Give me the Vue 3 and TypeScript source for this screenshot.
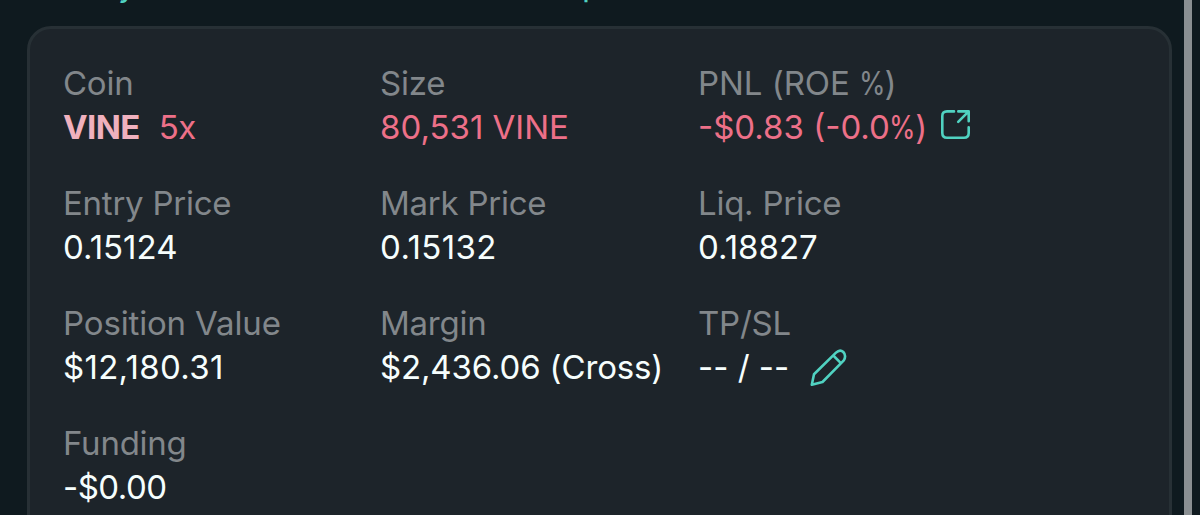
<script setup lang="ts">
type Kind = 'coin' | 'down' | 'plain'
interface Field {
  id: string
  label: string
  value: string
  kind: Kind
  extra?: string
  icon?: 'share' | 'edit'
}

const fields: Field[] = [
  { id: 'coin-name', label: 'Coin', value: 'VINE', kind: 'coin', extra: '5x' },
  { id: 'size', label: 'Size', value: '80,531 VINE', kind: 'down' },
  { id: 'pnl', label: 'PNL (ROE %)', value: '-$0.83 (-0.0%)', kind: 'down', icon: 'share' },
  { id: 'entry', label: 'Entry Price', value: '0.15124', kind: 'plain' },
  { id: 'mark', label: 'Mark Price', value: '0.15132', kind: 'plain' },
  { id: 'liq', label: 'Liq. Price', value: '0.18827', kind: 'plain' },
  { id: 'position', label: 'Position Value', value: '$12,180.31', kind: 'plain' },
  { id: 'margin', label: 'Margin', value: '$2,436.06 (Cross)', kind: 'plain' },
  { id: 'tpsl', label: 'TP/SL', value: '-- / --', kind: 'plain', icon: 'edit' },
  { id: 'funding', label: 'Funding', value: '-$0.00', kind: 'plain' },
]

// Percent signs are set in a condensed form, so they are split out of the text.
const parts = (text: string): string[] => text.split(/(%)/)
</script>

<template>
  <main class="screen">
    <div class="links"><span class="first">y</span><span>p</span></div>
    <section class="card">
      <div v-for="f in fields" :key="f.id" class="field" :class="f.id">
        <div class="label"><span v-for="(p, i) in parts(f.label)" :key="i" :class="{ percent: p === '%' }">{{ p }}</span></div>
        <div class="value" :class="f.kind">
          <span v-for="(p, i) in parts(f.value)" :key="i" :class="{ percent: p === '%' }">{{ p }}</span>
          <span v-if="f.extra" class="leverage">{{ f.extra }}</span>
          <svg v-if="f.icon === 'share'" class="share" viewBox="0 0 32 32" width="32" height="32">
            <path d="M14 2.4H7Q2.3 2.4 2.3 7V24Q2.3 28.7 7 28.7H24Q28.7 28.7 28.7 24V18.3M18.3 2.4H28.7V12.2M28.2 2.9L18.2 12.9" />
          </svg>
          <svg v-if="f.icon === 'edit'" class="edit" viewBox="0 0 38 38" width="38" height="38">
            <path d="M2.8 36.7L5 26.2L27 4.6Q31 .8 34.3 4Q37.6 7.6 34.8 12.4L13.5 34ZM24.3 7.5L31.6 14.8" />
          </svg>
        </div>
      </div>
    </section>
    <div class="scrollbar"></div>
  </main>
</template>

<style>
body {
  background: #0f1a1f;
  overflow: hidden;
}
</style>

<style scoped>
.screen {
  position: relative;
  box-sizing: border-box;
  width: 1200px;
  height: 515px;
  padding: 26px 28px 0 27px;
  overflow: hidden;
  background: #0f1a1f;
  font-family: Inter, sans-serif;
  font-size: 33px;
}
.links {
  position: absolute;
  top: -36px;
  left: 118px;
  display: flex;
  line-height: 40px;
  color: #50d2c1;
}
.first {
  width: 464px;
}
.card {
  box-sizing: border-box;
  height: 540px;
  padding: 32px 33px 0;
  display: grid;
  grid-template-columns: 317px 318px 1fr;
  grid-auto-rows: 120px;
  align-content: start;
  border: 3px solid #273035;
  border-radius: 24px;
  background: #1d242a;
}
.label,
.value {
  height: 44px;
  line-height: 44px;
  white-space: pre;
}
.label {
  color: #82878b;
  letter-spacing: -0.25px;
}
.value {
  display: flex;
  color: #f6fefd;
}
.percent {
  display: inline-block;
  margin: 0 -3.5px;
  transform: scaleX(0.82);
}
.pnl .label {
  letter-spacing: -0.05px;
}
.position .label {
  letter-spacing: -0.15px;
}
.mark .value {
  letter-spacing: 0.4px;
}
.position .value {
  letter-spacing: 0.3px;
}
.margin .value {
  letter-spacing: -0.15px;
}
.funding .value {
  letter-spacing: -0.5px;
}
.down {
  color: #ed7088;
}
.coin {
  color: #f0b1be;
  font-weight: 700;
  letter-spacing: -0.6px;
}
.leverage {
  margin-left: 19px;
  color: #ed7088;
  font-weight: 400;
}
svg {
  flex: none;
  fill: none;
  stroke: #50d2c1;
  stroke-width: 2.6;
  stroke-linecap: round;
  stroke-linejoin: round;
}
.share {
  margin: 4px 0 0 13px;
}
.edit {
  margin: 3px 0 0 20px;
}
.scrollbar {
  position: absolute;
  top: 0;
  right: 8px;
  width: 8px;
  height: 100%;
  background: #8a8f92;
}
</style>
